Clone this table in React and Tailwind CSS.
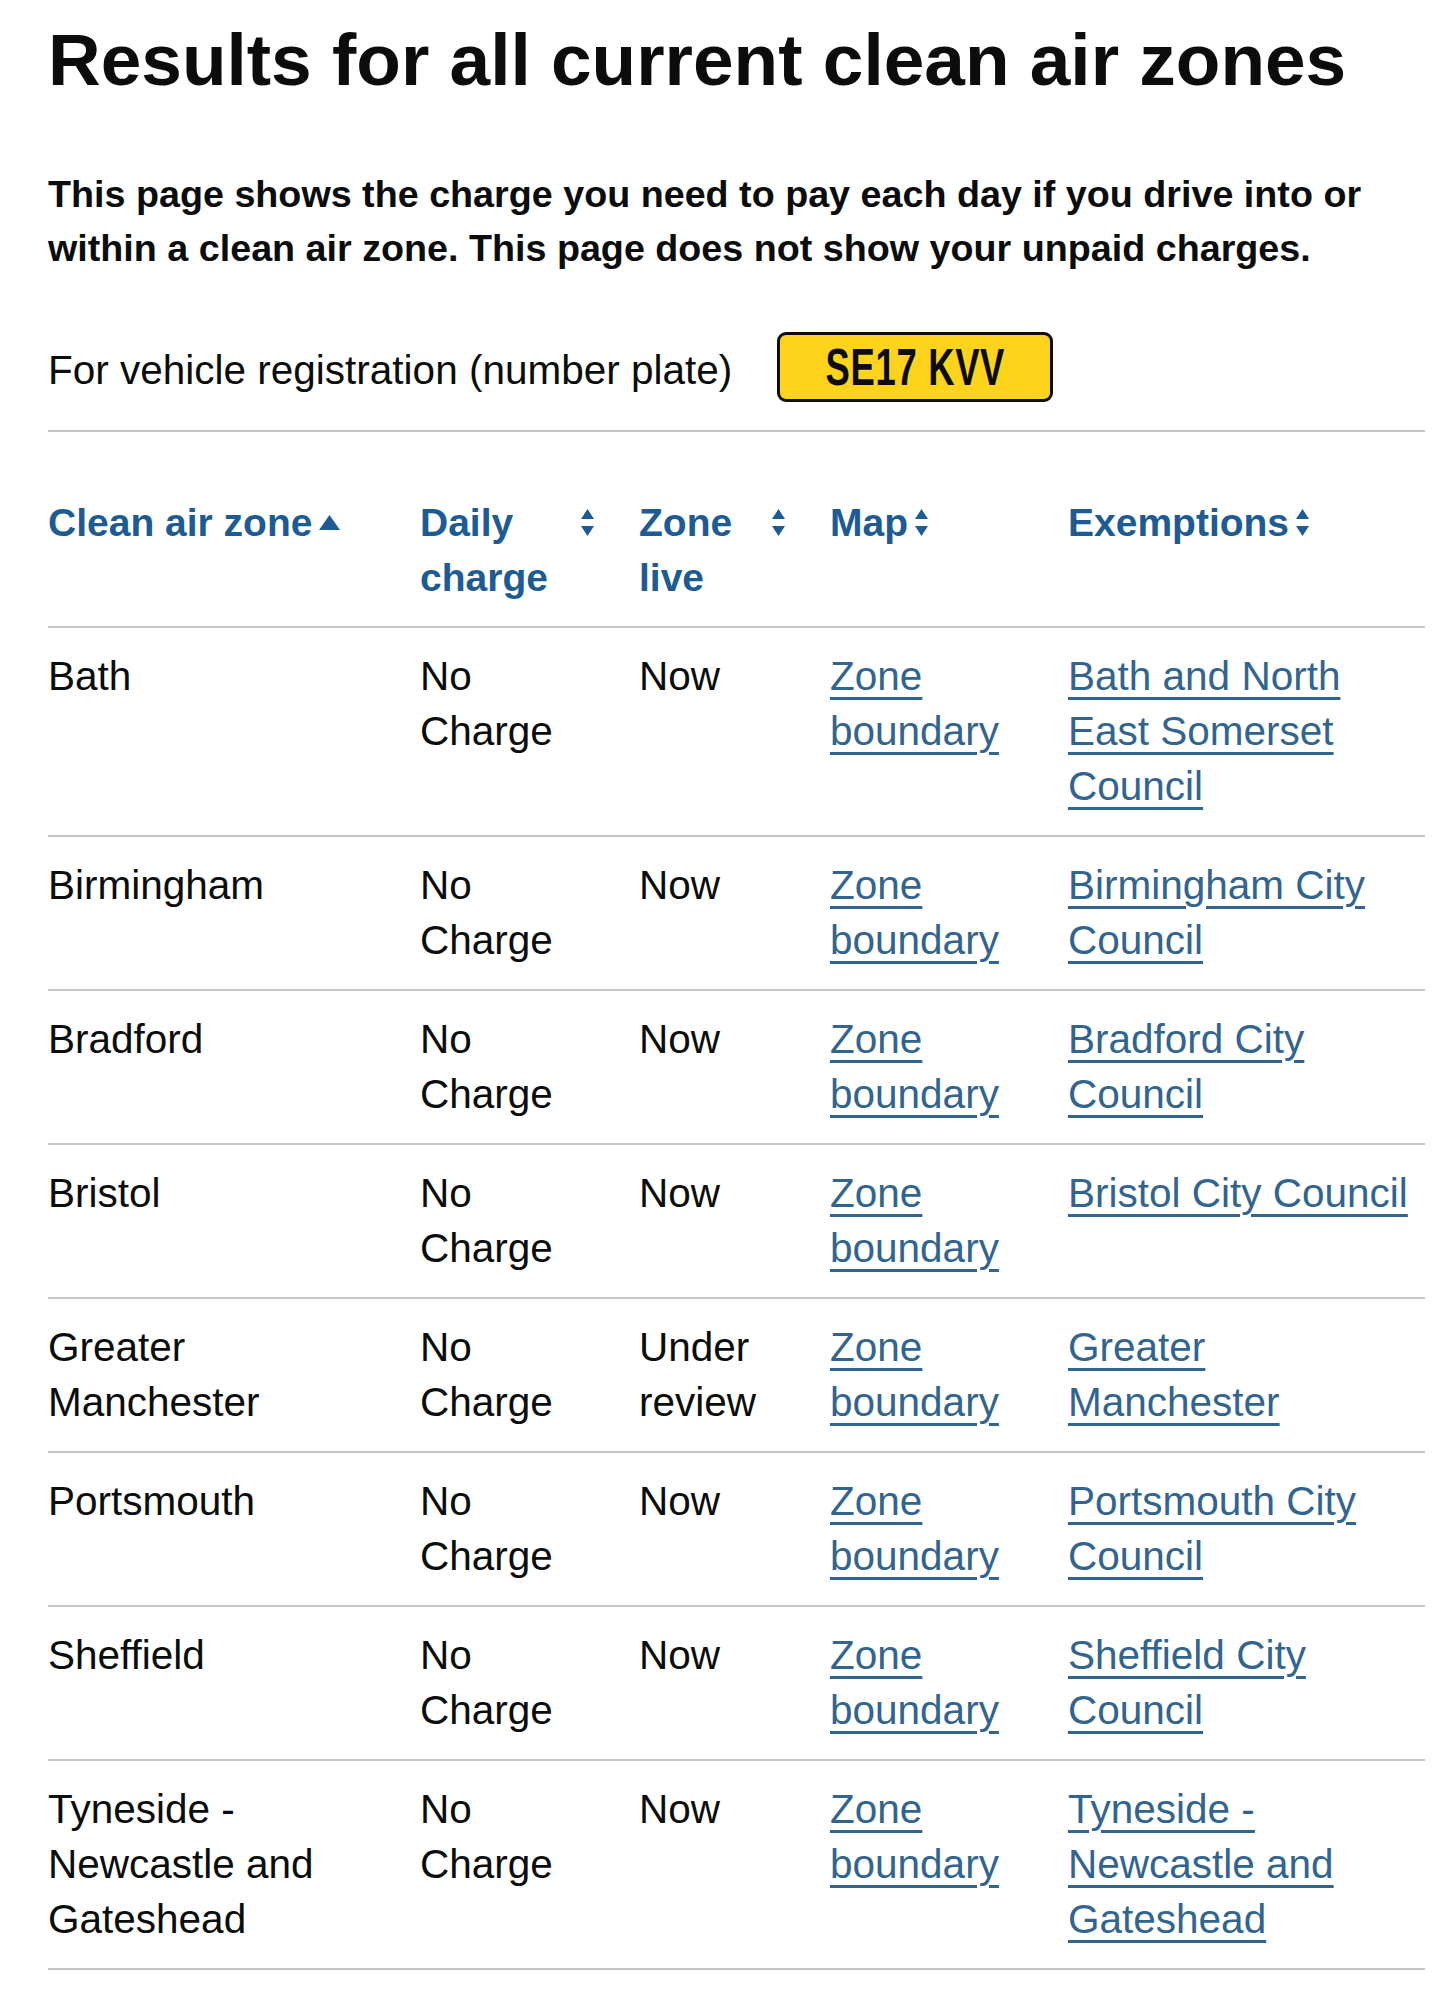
import React from "react";

function SortBoth() {
  return (
    <svg width="13" height="27" viewBox="0 0 13 27" className="shrink-0">
      <polygon points="6.5,0 13,10 0,10" fill="#1d5b94" />
      <polygon points="0,17 13,17 6.5,27" fill="#1d5b94" />
    </svg>
  );
}

function SortUp() {
  return (
    <svg width="21" height="15" viewBox="0 0 21 15" className="shrink-0">
      <polygon points="10.5,0 21,15 0,15" fill="#1d5b94" />
    </svg>
  );
}

const rows = [
  { zone: ["Bath"], live: ["Now"], ex: ["Bath and North", "East Somerset", "Council"] },
  { zone: ["Birmingham"], live: ["Now"], ex: ["Birmingham City", "Council"] },
  { zone: ["Bradford"], live: ["Now"], ex: ["Bradford City", "Council"] },
  { zone: ["Bristol"], live: ["Now"], ex: ["Bristol City Council"] },
  { zone: ["Greater", "Manchester"], live: ["Under", "review"], ex: ["Greater", "Manchester"] },
  { zone: ["Portsmouth"], live: ["Now"], ex: ["Portsmouth City", "Council"] },
  { zone: ["Sheffield"], live: ["Now"], ex: ["Sheffield City", "Council"] },
  { zone: ["Tyneside -", "Newcastle and", "Gateshead"], live: ["Now"], ex: ["Tyneside -", "Newcastle and", "Gateshead"] },
];

function Lines({ lines }) {
  return lines.map((l, i) => (
    <React.Fragment key={i}>
      {i > 0 && <br />}
      {l}
    </React.Fragment>
  ));
}

function Link({ lines }) {
  return (
    <a
      href="#"
      className="text-[#31648f] underline decoration-[3px] underline-offset-[7px]"
    >
      <Lines lines={lines} />
    </a>
  );
}

const grid = "grid grid-cols-[372px_219px_191px_238px_1fr] border-b-2 border-[#c3c5c7]";
const cell = "py-[21px] pr-[45px] whitespace-nowrap";
const lastCell = "py-[21px] whitespace-nowrap";

export default function App() {
  return (
    <div className="w-[1440px] min-h-[2000px] bg-white pl-[48px] pr-[15px] font-['Liberation_Sans',Arial,sans-serif] text-[#0b0c0c]">
      <h1 className="pt-[20px] text-[73px] leading-[80px] font-bold whitespace-nowrap">
        Results for all current clean air zones
      </h1>

      <p className="mt-[67px] text-[37.7px] leading-[54px] font-bold whitespace-nowrap">
        This page shows the charge you need to pay each day if you drive into or
        <br />
        within a clean air zone. This page does not show your unpaid charges.
      </p>

      <div className="mt-[57px] flex items-center h-[70px]">
        <span className="text-[40.5px] leading-[55px] pt-[6px] whitespace-nowrap">
          For vehicle registration (number plate)
        </span>
        <div className="ml-[45px] w-[276px] h-[70px] rounded-[9px] border-[3px] border-[#0b0c0c] bg-[#fdd31b] flex items-center justify-center">
          <span className="font-bold text-[52px] leading-none scale-x-[0.7] whitespace-nowrap tracking-[1px]">
            SE17 KVV
          </span>
        </div>
      </div>

      <div className="mt-[28px] h-[2px] bg-[#c3c5c7]" />

      <div className="mt-[42px] text-[40.5px] leading-[55px]">
        <div className={grid + " text-[39px] font-bold text-[#1d5b94]"}>
          <div className={cell + " flex items-center gap-[7px] h-fit"}>
            <span>Clean air zone</span>
            <SortUp />
          </div>
          <div className={cell + " flex items-start"}>
            <span className="flex-1">
              Daily
              <br />
              charge
            </span>
            <span className="h-[55px] flex items-center">
              <SortBoth />
            </span>
          </div>
          <div className={cell + " flex items-start"}>
            <span className="flex-1">
              Zone
              <br />
              live
            </span>
            <span className="h-[55px] flex items-center">
              <SortBoth />
            </span>
          </div>
          <div className={cell + " flex items-start gap-[7px]"}>
            <span>Map</span>
            <span className="h-[55px] flex items-center">
              <SortBoth />
            </span>
          </div>
          <div className={lastCell + " flex items-start gap-[7px]"}>
            <span>Exemptions</span>
            <span className="h-[55px] flex items-center">
              <SortBoth />
            </span>
          </div>
        </div>

        {rows.map((r, i) => (
          <div key={i} className={grid}>
            <div className={cell}>
              <Lines lines={r.zone} />
            </div>
            <div className={cell}>
              No
              <br />
              Charge
            </div>
            <div className={cell}>
              <Lines lines={r.live} />
            </div>
            <div className={cell}>
              <Link lines={["Zone", "boundary"]} />
            </div>
            <div className={lastCell}>
              <Link lines={r.ex} />
            </div>
          </div>
        ))}
      </div>
    </div>
  );
}
